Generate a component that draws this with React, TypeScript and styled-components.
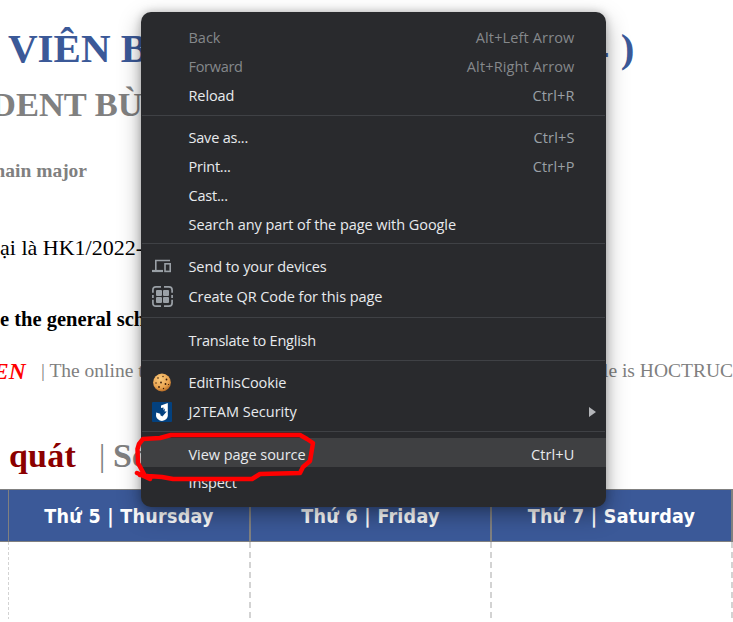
import React from "react";
import styled, { createGlobalStyle } from "styled-components";

const Global = createGlobalStyle`
  * { box-sizing: border-box; }
  body { margin: 0; background: #fff; overflow: hidden; }
`;

const Page = styled.main`
  position: relative;
  width: 733px;
  height: 622px;
  overflow: hidden;
  display: flex;
  flex-direction: column;
  font-family: "Liberation Serif", serif;
`;

const Line = styled.div<{ $h: number; $x: number; $size: number; $color: string; $bold?: boolean }>`
  height: ${p => p.$h}px;
  line-height: ${p => p.$h}px;
  margin-left: ${p => p.$x}px;
  font-size: ${p => p.$size}px;
  color: ${p => p.$color};
  font-weight: ${p => (p.$bold ? 700 : 400)};
  white-space: pre;
  display: flex;
  flex: none;
`;

const Cell = styled.span<{ $w?: number; $color?: string; $size?: number; $bold?: boolean; $italic?: boolean; $ls?: number }>`
  flex: none;
  width: ${p => (p.$w ? `${p.$w}px` : "auto")};
  letter-spacing: ${p => p.$ls ?? 0}px;
  ${p => p.$color && `color: ${p.$color};`}
  ${p => p.$size && `font-size: ${p.$size}px;`}
  ${p => p.$bold !== undefined && `font-weight: ${p.$bold ? 700 : 400};`}
  ${p => p.$italic && "font-style: italic;"}
`;

const Gap = styled.div<{ $h: number }>`
  flex: none;
  height: ${p => p.$h}px;
`;

const Table = styled.div`
  display: grid;
  grid-template-columns: 9px 242px 241px 241px;
  grid-template-rows: 53px 80px;
  flex: none;
`;

const Head = styled.div<{ $b: number }>`
  background: #3b5998;
  border: solid #808080;
  border-width: 1px ${p => p.$b}px 1px 0;
  color: #fff;
  font: 700 19.5px/53px "DejaVu Sans Condensed", "DejaVu Sans", sans-serif;
  font-stretch: condensed;
  letter-spacing: 0.27px;
  text-align: center;
  white-space: nowrap;
`;

const Body = styled.div<{ $b: number }>`
  background: repeating-linear-gradient(#d3d3d3 0 ${p => p.$b * 3}px, transparent ${p => p.$b * 3}px ${p => p.$b * 5}px)
    right top / ${p => p.$b}px 77px no-repeat;
`;

const Menu = styled.div`
  position: absolute;
  left: 141px;
  top: 12px;
  width: 465px;
  height: 495px;
  padding-top: 10px;
  border-radius: 10px;
  background: #292a2d;
  box-shadow: 0 8px 22px rgba(0, 0, 0, 0.34), 0 0 8px rgba(0, 0, 0, 0.22);
  font-family: "Open Sans", sans-serif;
  font-size: 14.5px;
  color: #e8eaed;
`;

const Item = styled.div<{ $h?: number; $top?: number; $hot?: boolean; $off?: boolean }>`
  display: grid;
  grid-template-columns: 47.500px 1fr auto 31.500px;
  align-items: center;
  height: ${p => p.$h ?? 29}px;
  padding-top: ${p => p.$top ?? 2}px;
  background: ${p => (p.$hot ? "#3f4042" : "transparent")};
  color: ${p => (p.$off ? "#85888b" : "inherit")};
  white-space: nowrap;
`;

const Icon = styled.span`
  display: flex;
  padding-left: 11px;
`;

const Label = styled.span<{ $ls?: number }>`
  letter-spacing: ${p => p.$ls ?? 0}px;
`;

const Keys = styled.span<{ $hot?: boolean; $off?: boolean }>`
  color: ${p => (p.$hot ? "#e8eaed" : p.$off ? "#85888b" : "#9aa0a6")};
  letter-spacing: 0.14px;
`;

const Arrow = styled.span`
  display: flex;
  padding-left: 14.500px;
`;

const Sep = styled.div<{ $h?: number; $y?: number }>`
  height: ${p => p.$h ?? 13}px;
  padding: ${p => p.$y ?? 6}px 1px 0;
  &::before {
    content: "";
    display: block;
    height: 1px;
    background: #3f4145;
  }
`;

const Scribble = styled.svg`
  position: absolute;
  left: 130px;
  top: 425px;
`;

const Devices = () => (
  <svg width="20" height="20" viewBox="0 0 20 20" fill="none" stroke="#9aa0a6">
    <path d="M18 4.500H3.800V14" strokeWidth="1.600" />
    <path d="M0 15h11" strokeWidth="2.200" />
    <rect x="13" y="7.800" width="5.200" height="7.600" strokeWidth="1.600" />
  </svg>
);

const Qr = () => (
  <svg width="21" height="21" viewBox="0 0 21 21">
    <g fill="none" stroke="#9aa0a6" strokeWidth="1.700">
      <path d="M.9 6.800V4Q.9.9 4 .9h5M12 .9h5q3.100 0 3.100 3.100v2.800M20.100 13.800V17q0 3.100-3.100 3.100h-5M9 20.100H4Q.9 20.100.9 17v-3.200M.9 9v3M20.100 9v3" />
    </g>
    <g fill="#9aa0a6">
      <rect x="4" y="4" width="6" height="6" rx="1" />
      <rect x="11" y="4" width="6" height="6" rx="1" />
      <rect x="4" y="11" width="6" height="6" rx="1" />
      <rect x="11" y="11" width="6" height="6" rx="1" />
    </g>
  </svg>
);

const Cookie = () => (
  <svg width="20" height="20" viewBox="0 0 20 20">
    <defs>
      <radialGradient id="dough" cx=".4" cy=".3" r=".75">
        <stop offset="0" stopColor="#fac97c" />
        <stop offset=".65" stopColor="#eaa450" />
        <stop offset="1" stopColor="#b0641e" />
      </radialGradient>
    </defs>
    <circle cx="10" cy="9.500" r="8.900" fill="url(#dough)" />
    <g fill="#3a1c0a">
      <circle cx="6" cy="5" r=".8" /><circle cx="11" cy="3.500" r=".7" /><circle cx="14.500" cy="6.500" r=".9" />
      <circle cx="9" cy="9.500" r=".9" /><circle cx="4" cy="10" r=".7" /><circle cx="13.500" cy="11" r=".9" />
      <circle cx="7" cy="14" r=".9" /><circle cx="11.500" cy="15.500" r=".7" /><circle cx="16.500" cy="11.500" r=".6" />
    </g>
  </svg>
);

const Shield = () => (
  <svg width="20" height="20" viewBox="0 0 20 20">
    <rect width="20" height="20" rx="1" fill="#03417f" />
    <path d="M9 3.500 15.800 1v13q-.5 4-5.800 5-5-.8-6-5l.2-3.500 4 1.300q0 2.200 1.600 2.200 1.700-.2 1.700-2V5.500L9 6z" fill="#fff" />
    <path d="m13 6.500-4 4h2.300l-1.500 4.500 5-5.500h-2.300z" fill="#03417f" />
  </svg>
);

export default function App() {
  return (
    <>
      <Global />
      <Page>
        <Gap $h={24} />
        <Line $h={48} $x={8} $size={41} $color="#3b5998" $bold>
          <Cell $w={580}>VIÊN B</Cell>
          <Cell $ls={1}>4 )</Cell>
        </Line>
        <Gap $h={11} />
        <Line $h={42} $x={-9} $size={34.5} $color="#808080" $bold>DENT BÙ</Line>
        <Gap $h={33} />
        <Line $h={26} $x={-11} $size={19.5} $color="#808080" $bold>main major</Line>
        <Gap $h={50} />
        <Line $h={28} $x={0} $size={22} $color="#000">ại là HK1/2022-</Line>
        <Gap $h={43} />
        <Line $h={28} $x={0} $size={20.5} $color="#000" $bold>e the general sch</Line>
        <Gap $h={23} />
        <Line $h={30} $x={-7} $size={19.5} $color="#808080">
          <Cell $w={48} $color="#f00" $size={23.5} $bold $italic>EN</Cell>
          <Cell $w={562}>| The online t</Cell>
          <Cell>le is HOCTRUC</Cell>
        </Line>
        <Gap $h={48} />
        <Line $h={44} $x={9} $size={34} $color="#8b0000" $bold>
          <Cell $w={90} $ls={0.2}>quát</Cell>
          <Cell $w={14} $color="#808080" $size={31} $bold={false}>|</Cell>
          <Cell $color="#808080">Sc</Cell>
        </Line>
        <Gap $h={11} />
        <Table>
          <Head $b={1} />
          <Head $b={2}>Thứ 5 | Thursday</Head>
          <Head $b={2}>Thứ 6 | Friday</Head>
          <Head $b={2}>Thứ 7 | Saturday</Head>
          <Body $b={1} />
          <Body $b={2} />
          <Body $b={2} />
          <Body $b={2} />
        </Table>

        <Menu>
          <Item $off><Icon /><Label>Back</Label><Keys $off>Alt+Left Arrow</Keys></Item>
          <Item $off><Icon /><Label $ls={-0.3}>Forward</Label><Keys $off>Alt+Right Arrow</Keys></Item>
          <Item><Icon /><Label $ls={-0.1}>Reload</Label><Keys>Ctrl+R</Keys></Item>
          <Sep />
          <Item><Icon /><Label $ls={-0.2}>Save as...</Label><Keys>Ctrl+S</Keys></Item>
          <Item><Icon /><Label $ls={-0.2}>Print...</Label><Keys>Ctrl+P</Keys></Item>
          <Item><Icon /><Label $ls={-0.2}>Cast...</Label></Item>
          <Item><Icon /><Label $ls={-0.06}>Search any part of the page with Google</Label></Item>
          <Sep $y={5} />
          <Item $h={30} $top={0}><Icon><Devices /></Icon><Label $ls={-0.08}>Send to your devices</Label></Item>
          <Item><Icon><Qr /></Icon><Label $ls={-0.06}>Create QR Code for this page</Label></Item>
          <Sep $h={15} $y={7} />
          <Item><Icon /><Label $ls={-0.24}>Translate to English</Label></Item>
          <Sep />
          <Item><Icon><Cookie /></Icon><Label $ls={-0.1}>EditThisCookie</Label></Item>
          <Item>
            <Icon><Shield /></Icon><Label>J2TEAM Security</Label><Keys />
            <Arrow><svg width="8" height="10"><path d="M0 0 7 5 0 10z" fill="#b4b6b9" /></svg></Arrow>
          </Item>
          <Sep />
          <Item $hot $top={4}><Icon /><Label $ls={-0.04}>View page source</Label><Keys $hot>Ctrl+U</Keys></Item>
          <Item><Icon /><Label $ls={-0.1}>Inspect</Label></Item>
        </Menu>

        <Scribble width="200" height="75" fill="none" stroke="#f00" strokeLinejoin="round" strokeLinecap="round">
          <path strokeWidth="4.500" d="M7 48 20 54M10 50 18 51 32 52 43 54H122L130 49 170 48 173 42 180 36 183 18 177 14 170 10H41L30 13 13 14 9 19 7.500 24 8 38 14 49" />
        </Scribble>
      </Page>
    </>
  );
}
